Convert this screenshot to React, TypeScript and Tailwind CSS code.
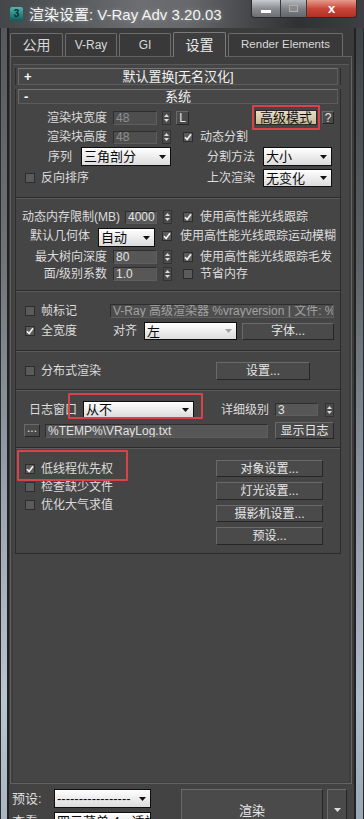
import React from "react";

const font = "font-['Liberation_Sans','Noto_Sans_CJK_SC',sans-serif]";

function L({ children, className = "" }: { children: React.ReactNode; className?: string }) {
  return (
    <div className={`text-[12px] leading-none text-[#dcdcdc] whitespace-nowrap ${className}`}>{children}</div>
  );
}

function Spin({ className = "" }: { className?: string }) {
  return (
    <div
      className={`w-[9px] h-[14px] shrink-0 flex flex-col items-center justify-between py-[2px] bg-[#4b4b4b] border border-[#333333] ${className}`}
    >
      <svg width="5" height="3" viewBox="0 0 5 3">
        <path d="M0 3L2.5 0L5 3Z" fill="#dcdcdc" />
      </svg>
      <svg width="5" height="3" viewBox="0 0 5 3">
        <path d="M0 0H5L2.5 3Z" fill="#dcdcdc" />
      </svg>
    </div>
  );
}

function Check({ on = false, className = "" }: { on?: boolean; className?: string }) {
  return (
    <div
      className={`w-[10px] h-[10px] shrink-0 bg-[#5b5b5b] border border-[#2c2c2c] flex items-center justify-center ${className}`}
    >
      {on && (
        <svg width="8" height="8" viewBox="0 0 8 8">
          <path d="M1 4.2L3.1 6.5L7 1.2" stroke="#f2f2f2" strokeWidth="1.7" fill="none" />
        </svg>
      )}
    </div>
  );
}

function Drop({
  text,
  className = "",
  disabled = false,
}: {
  text: string;
  className?: string;
  disabled?: boolean;
}) {
  return (
    <div
      className={`flex items-center justify-between shrink-0 bg-linear-to-b from-[#ffffff] to-[#dcdcdc] border border-[#0e0e0e] pl-[2px] pr-[4px] text-[13px] leading-none text-[#0a0a0a] overflow-hidden whitespace-nowrap ${className}`}
    >
      <span>{text}</span>
      <svg width="7" height="4" viewBox="0 0 7 4" className="shrink-0">
        <path d="M0 0H7L3.5 4Z" fill={disabled ? "#a4a4a4" : "#111111"} />
      </svg>
    </div>
  );
}

function Btn({ children, className = "" }: { children: React.ReactNode; className?: string }) {
  return (
    <div
      className={`flex items-center justify-center shrink-0 bg-[#4a4a4a] border border-t-[#6a6a6a] border-l-[#6a6a6a] border-b-[#262626] border-r-[#262626] text-[12px] leading-none text-[#e6e6e6] whitespace-nowrap ${className}`}
    >
      {children}
    </div>
  );
}

function Field({ text, className = "", dim = false }: { text: string; className?: string; dim?: boolean }) {
  return (
    <div
      className={`flex items-center shrink-0 border border-t-[#2e2e2e] border-l-[#2e2e2e] border-b-[#5e5e5e] border-r-[#5e5e5e] pl-[2px] text-[12px] leading-none overflow-hidden whitespace-nowrap ${
        dim ? "bg-[#4e4e4e] text-[#8f8f8f]" : "bg-[#575757] text-[#e2e2e2]"
      } ${className}`}
    >
      {text}
    </div>
  );
}

function Header({ sign, title, className = "" }: { sign: string; title: string; className?: string }) {
  return (
    <div
      className={`relative flex items-center justify-center bg-[#474747] border border-t-[#727272] border-l-[#6a6a6a] border-b-[#5c5c5c] border-r-[#5c5c5c] ${className}`}
    >
      <span className="absolute left-[5px] text-[13px] font-bold leading-none text-white">{sign}</span>
      <span className="text-[13px] leading-none text-[#f2f2f2]">{title}</span>
    </div>
  );
}

function TitleBar() {
  return (
    <div className="h-[28px] shrink-0 flex bg-[linear-gradient(90deg,#44474a_0%,#55585b_18%,#6c6e71_38%,#66686b_52%,#46484b_68%,#2f3134_82%,#3d3f42_100%)]">
      <div className="flex items-center pl-[10px] h-[28px]">
        <div className="w-[13px] h-[14px] rounded-[2px] bg-linear-to-b from-[#4fb8b0] to-[#0c5c5c] flex items-center justify-center text-[10px] font-bold leading-none text-[#0a3030]">
          3
        </div>
        <span className="ml-[6px] text-[15px] leading-none text-[#f4f4f4] [text-shadow:0_0_4px_rgba(255,255,255,0.35)]">
          渲染设置: V-Ray Adv 3.20.03
        </span>
      </div>
      <div className="ml-auto mr-[7px] flex h-[18px] rounded-b-[4px] overflow-hidden border border-t-0 border-[#2a2a2a]">
        <div className="w-[29px] flex items-end justify-center pb-[4px] bg-linear-to-b from-[#c9cdd1] via-[#8a8e92] to-[#6b6f73] border-r border-[#3a3a3a]">
          <div className="w-[10px] h-[3px] bg-white" />
        </div>
        <div className="w-[26px] flex items-center justify-center bg-linear-to-b from-[#b8bcc0] via-[#7f8387] to-[#62666a] border-r border-[#3a3a3a]">
          <div className="w-[9px] h-[7px] border border-[#b0b0b0] bg-[#8a8a8a]" />
        </div>
        <div className="w-[49px] flex items-center justify-center bg-linear-to-b from-[#e59a8c] via-[#c9473a] to-[#b22e22] text-[13px] font-bold leading-none text-white">
          x
        </div>
      </div>
    </div>
  );
}

function Tabs() {
  const base =
    "h-[23px] flex items-center justify-center bg-[#393939] border border-b-0 border-[#6c6c6c] rounded-t-[2px] text-[#d8d8d8] leading-none";
  return (
    <div className="h-[28px] shrink-0 flex items-end pl-[1px] gap-[2px]">
      <div className={`${base} w-[53px] text-[14px]`}>公用</div>
      <div className={`${base} w-[52px] text-[12px]`}>V-Ray</div>
      <div className={`${base} w-[52px] text-[12px]`}>GI</div>
      <div className="relative z-10 mb-[-1px] h-[25px] w-[53px] flex items-center justify-center bg-[#3e3e3e] border border-b-0 border-[#7a7a7a] rounded-t-[2px] text-[14px] leading-none text-[#ececec]">
        设置
      </div>
      <div className={`${base} w-[115px] text-[11.5px]`}>Render Elements</div>
    </div>
  );
}

function Red({ className = "" }: { className?: string }) {
  return <div className={`absolute border-2 border-[#d8434b] rounded-[1px] ${className}`} />;
}

function Group1() {
  return (
    <div className="h-[94px] border-b border-[#2b2b2b] flex flex-col">
      <div className="flex items-center h-[15px] mt-[6px]">
        <L className="w-[94px] text-right pr-[3px]">渲染块宽度</L>
        <Field text="48" dim className="ml-[3px] w-[44px] h-[14px]" />
        <Spin className="ml-[5px]" />
        <Btn className="ml-[5px] w-[13px] h-[14px] text-[#a0a0a0]">L</Btn>
        <div className="relative ml-[66px]">
          <Red className="left-[-3px] top-[-5px] w-[68px] h-[25px]" />
          <div className="w-[62px] h-[15px] flex items-center justify-center bg-linear-to-b from-[#e7ddc2] to-[#c9bb94] border border-[#2a2a2a] text-[13px] leading-none text-[#111111]">
            高级模式
          </div>
        </div>
        <Btn className="ml-[5px] w-[12px] h-[13px]">?</Btn>
      </div>
      <div className="flex items-center h-[14px] mt-[5px]">
        <L className="w-[94px] text-right pr-[3px]">渲染块高度</L>
        <Field text="48" dim className="ml-[3px] w-[44px] h-[13px]" />
        <Spin className="ml-[5px]" />
        <Check on className="ml-[12px]" />
        <L className="ml-[7px]">动态分割</L>
      </div>
      <div className="flex items-center h-[19px] mt-[3px]">
        <L className="w-[59px] text-right pr-[3px]">序列</L>
        <Drop text="三角剖分" className="ml-[6px] w-[90px] h-[19px]" />
        <L className="w-[87px] text-right pr-[3px]">分割方法</L>
        <Drop text="大小" className="ml-[5px] w-[69px] h-[19px]" />
      </div>
      <div className="flex items-center h-[18px] mt-[3px]">
        <div className="w-[155px] flex items-center">
          <Check className="ml-[9px]" />
          <L className="ml-[6px]">反向排序</L>
        </div>
        <L className="w-[87px] text-right pr-[3px]">上次渲染</L>
        <Drop text="无变化" className="ml-[5px] w-[69px] h-[18px]" />
      </div>
    </div>
  );
}

function Group2() {
  return (
    <div className="h-[93px] border-t border-t-[#5c5c5c] border-b border-b-[#2b2b2b] flex flex-col">
      <div className="flex items-center h-[14px] mt-[11px]">
        <L className="w-[107px] text-right pr-[3px]">动态内存限制(MB)</L>
        <Field text="4000" className="ml-[2px] w-[32px] h-[13px]" />
        <Spin className="ml-[6px]" />
        <Check on className="ml-[11px]" />
        <L className="ml-[7px]">使用高性能光线跟踪</L>
      </div>
      <div className="flex items-center h-[19px] mt-[4px]">
        <L className="w-[77px] text-right pr-[3px] mb-[3px]">默认几何体</L>
        <Drop text="自动" className="ml-[5px] w-[57px] h-[19px]" />
        <Check on className="ml-[7px] mb-[3px]" />
        <L className="ml-[8px] mb-[3px]">使用高性能光线跟踪运动模糊</L>
      </div>
      <div className="flex items-center h-[14px] mt-[3px]">
        <L className="w-[94px] text-right pr-[3px]">最大树向深度</L>
        <Field text="80" className="ml-[3px] w-[44px] h-[14px]" />
        <Spin className="ml-[6px]" />
        <Check on className="ml-[11px]" />
        <L className="ml-[7px]">使用高性能光线跟踪毛发</L>
      </div>
      <div className="flex items-center h-[14px] mt-[3px]">
        <L className="w-[94px] text-right pr-[3px]">面/级别系数</L>
        <Field text="1.0" className="ml-[3px] w-[44px] h-[14px]" />
        <Spin className="ml-[6px]" />
        <Check className="ml-[11px]" />
        <L className="ml-[7px]">节省内存</L>
      </div>
    </div>
  );
}

function Group3() {
  return (
    <div className="h-[60px] border-t border-t-[#5c5c5c] border-b border-b-[#2b2b2b] flex flex-col">
      <div className="flex items-center h-[14px] mt-[12px]">
        <div className="w-[94px] flex items-center">
          <Check className="ml-[9px]" />
          <L className="ml-[6px]">帧标记</L>
        </div>
        <Field text="V-Ray 高级渲染器 %vrayversion | 文件: %f" dim className="w-[224px] h-[14px] text-[#a2a2a2]" />
      </div>
      <div className="flex items-center h-[18px] mt-[4px]">
        <div className="w-[94px] flex items-center">
          <Check on className="ml-[9px]" />
          <L className="ml-[6px]">全宽度</L>
        </div>
        <L className="w-[34px] pl-[3px]">对齐</L>
        <Drop text="左" disabled className="w-[93px] h-[18px]" />
        <Btn className="ml-[5px] w-[92px] h-[17px]">字体...</Btn>
      </div>
    </div>
  );
}

function Group4() {
  return (
    <div className="h-[39px] border-t border-t-[#5c5c5c] border-b border-b-[#2b2b2b] flex flex-col">
      <div className="flex items-center h-[18px] mt-[10px]">
        <div className="w-[200px] flex items-center">
          <Check className="ml-[9px]" />
          <L className="ml-[6px]">分布式渲染</L>
        </div>
        <Btn className="w-[94px] h-[18px]">设置...</Btn>
      </div>
    </div>
  );
}

function Group5() {
  return (
    <div className="h-[58px] border-t border-t-[#5c5c5c] border-b border-b-[#2b2b2b] flex flex-col">
      <div className="flex items-center h-[17px] mt-[10px]">
        <L className="w-[64px] text-right pr-[3px]">日志窗口</L>
        <div className="relative ml-[3px]">
          <Red className="left-[-15px] top-[-8px] w-[135px] h-[26px]" />
          <Drop text="从不" className="w-[111px] h-[17px]" />
        </div>
        <L className="w-[78px] text-right pr-[3px]">详细级别</L>
        <Field text="3" className="ml-[3px] w-[43px] h-[13px] text-[#cfcfcf]" />
        <Spin className="ml-[7px]" />
      </div>
      <div className="flex items-center h-[17px] mt-[4px]">
        <Btn className="ml-[8px] w-[16px] h-[13px] items-end pb-[2px]">...</Btn>
        <Field text={"%TEMP%\\VRayLog.txt"} className="ml-[5px] w-[223px] h-[14px] text-[#d4d4d4]" />
        <Btn className="ml-[7px] w-[59px] h-[17px]">显示日志</Btn>
      </div>
    </div>
  );
}

function Group6() {
  return (
    <div className="h-[106px] border-t border-t-[#5c5c5c] border-b border-b-[#2b2b2b] flex">
      <div className="w-[200px] pt-[11px] flex flex-col">
        <div className="relative flex items-center h-[18px]">
          <Red className="left-[1px] top-[-10px] w-[111px] h-[31px]" />
          <Check on className="ml-[9px]" />
          <L className="ml-[6px]">低线程优先权</L>
        </div>
        <div className="flex items-center h-[18px]">
          <Check className="ml-[9px]" />
          <L className="ml-[6px]">检查缺少文件</L>
        </div>
        <div className="flex items-center h-[18px]">
          <Check className="ml-[9px]" />
          <L className="ml-[6px]">优化大气求值</L>
        </div>
      </div>
      <div className="w-[107px] pt-[11px] flex flex-col gap-[5px]">
        <Btn className="w-[107px] h-[17px]">对象设置...</Btn>
        <Btn className="w-[107px] h-[18px]">灯光设置...</Btn>
        <Btn className="w-[107px] h-[17px]">摄影机设置...</Btn>
        <Btn className="w-[107px] h-[18px]">预设...</Btn>
      </div>
    </div>
  );
}

function Panel() {
  return (
    <div className="ml-[1px] w-[342px] h-[728px] shrink-0 flex flex-col border border-[#626262] bg-[#3e3e3e] pt-[7px] px-[2px] pb-[1px]">
      <div className="flex-1 bg-[#454545] border-t border-[#595959] pt-[3px] pl-[2px] flex flex-col">
        <div className="w-[326px] border-x border-[#2c2c2c] px-[2px]">
          <Header sign="+" title="默认置换[无名汉化]" className="h-[17px]" />
        </div>
        <div className="mt-[4px] w-[326px] border-x border-[#2c2c2c] flex flex-col">
          <div className="px-[2px]">
            <Header sign="-" title="系统" className="h-[15px]" />
          </div>
          <Group1 />
          <Group2 />
          <Group3 />
          <Group4 />
          <Group5 />
          <Group6 />
        </div>
      </div>
    </div>
  );
}

function Bottom() {
  return (
    <div className="h-[35px] shrink-0 flex pl-[3px] bg-[#434343] overflow-hidden">
      <div className="w-[169px] flex flex-col shrink-0">
        <div className="flex items-center mt-[5px] h-[19px]">
          <L className="w-[42px] text-[13px]">预设:</L>
          <Drop text="-----------------" className="w-[97px] h-[19px]" />
        </div>
        <div className="flex items-center mt-[4px] h-[19px]">
          <L className="w-[42px] text-[13px]">查看:</L>
          <Drop text="四元菜单 4 - 透视" className="w-[97px] h-[19px]" />
          <div className="ml-[11px] w-[10px] h-[10px] mt-[5px] rounded-full bg-[#4a3f86] border border-[#9d93d4]" />
        </div>
      </div>
      <Btn className="mt-[5px] w-[142px] h-[42px] text-[13px]">渲染</Btn>
      <Btn className="ml-[4px] mt-[5px] w-[20px] h-[42px]">
        <svg width="7" height="4" viewBox="0 0 7 4">
          <path d="M0 0H7L3.5 4Z" fill="#dddddd" />
        </svg>
      </Btn>
    </div>
  );
}

export default function App() {
  return (
    <div className={`w-[364px] h-[819px] overflow-hidden flex flex-col bg-[#3a3a3a] ${font}`}>
      <TitleBar />
      <div className="flex flex-1 min-h-0">
        <div className="w-[7px] shrink-0 bg-[linear-gradient(180deg,#55585c_0%,#70757a_30%,#9aa5b1_60%,#b9c5d1_85%,#a9b5c1_100%)] border-l border-[#2a2a2a]" />
        <div className="w-[349px] shrink-0 flex flex-col bg-[#3b3b3b] border-x-2 border-[#222222]">
          <Tabs />
          <Panel />
          <Bottom />
        </div>
        <div className="w-[8px] shrink-0 bg-[linear-gradient(180deg,#404346_0%,#5d6266_30%,#8f9aa6_60%,#aebbc8_85%,#9aa7b4_100%)] border-r border-[#2a2a2a]" />
      </div>
    </div>
  );
}
